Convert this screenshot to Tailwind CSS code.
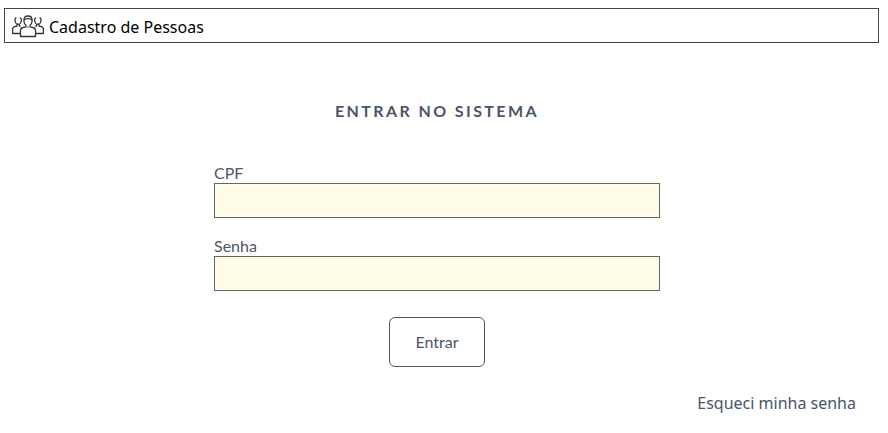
<!DOCTYPE html>
<html lang="pt-BR">
<head>
<meta charset="utf-8">
<meta name="viewport" content="width=device-width, initial-scale=1">
<title>Cadastro de Pessoas</title>
<script src="https://cdn.jsdelivr.net/npm/@tailwindcss/browser@4"></script>
</head>
<body class="bg-white pt-2 pr-[9px] pl-1 font-['Lato',sans-serif] text-base text-[#4a5568]">
<header class="flex items-center gap-[5px] border border-[#444] pt-[6px] pb-[3px] pl-[7px] font-['Noto_Sans',sans-serif] text-black">
  <svg class="h-6 w-8" viewBox="0 0 32 24" fill="none" stroke="#333" stroke-width="1.3" stroke-linejoin="round" aria-hidden="true">
    <path d="M8.500 21.500v-6q0-2.500 2.500-3l3-.7v-1.600q-2-1.200-2-3.600v-2q0-3.600 4-3.600t4 3.600v2q0 2.400-2 3.600v1.600l3 .7q2.500.5 2.500 3v6z"/>
    <path d="M12 5q2-1.700 4-1.300 2-.4 4 1.300"/>
    <path d="M13.500 11.500q2.500 1.500 5 0" stroke="#777" stroke-width="1"/>
    <path d="M4.300 2.500q-1.500 1-1.300 3.200.3 2.600 2 3.500v1.800l-2.500.7q-1.900.6-1.900 2.500v4.300h7.400M7.800 2.500q1.700.8 1.600 3-.3 2.800-2 3.700v1.800l1.400.5M5 9.200h2.400"/>
    <path d="M27.700 2.500q1.500 1 1.300 3.200-.3 2.600-2 3.500v1.800l2.500.7q1.900.6 1.900 2.500v4.300h-7.400M24.200 2.500q-1.700.8-1.600 3 .3 2.800 2 3.700v1.800l-1.400.5M27 9.200h-2.400"/>
  </svg>
  <span>Cadastro de Pessoas</span>
</header>
<main class="pr-[9px] pt-14">
  <h1 class="text-center text-base font-bold tracking-[0.15em]">ENTRAR NO SISTEMA</h1>
  <form class="mx-auto mt-10 flex w-full max-w-[446px] flex-col">
    <label for="cpf" class="leading-5">CPF</label>
    <input id="cpf" name="cpf" type="text" class="mb-[18px] h-[35px] w-full border border-[#666] bg-[#fffde5] px-2 outline-none">
    <label for="senha" class="leading-5">Senha</label>
    <input id="senha" name="senha" type="password" class="h-[35px] w-full border border-[#666] bg-[#fffde5] px-2 outline-none">
    <button type="submit" class="mt-[26px] h-[50px] self-center rounded-md border border-[#555] px-[25px]">Entrar</button>
  </form>
  <p class="mt-6 pr-[14px] text-right font-['Noto_Sans',sans-serif]"><a href="#">Esqueci minha senha</a></p>
</main>
</body>
</html>
